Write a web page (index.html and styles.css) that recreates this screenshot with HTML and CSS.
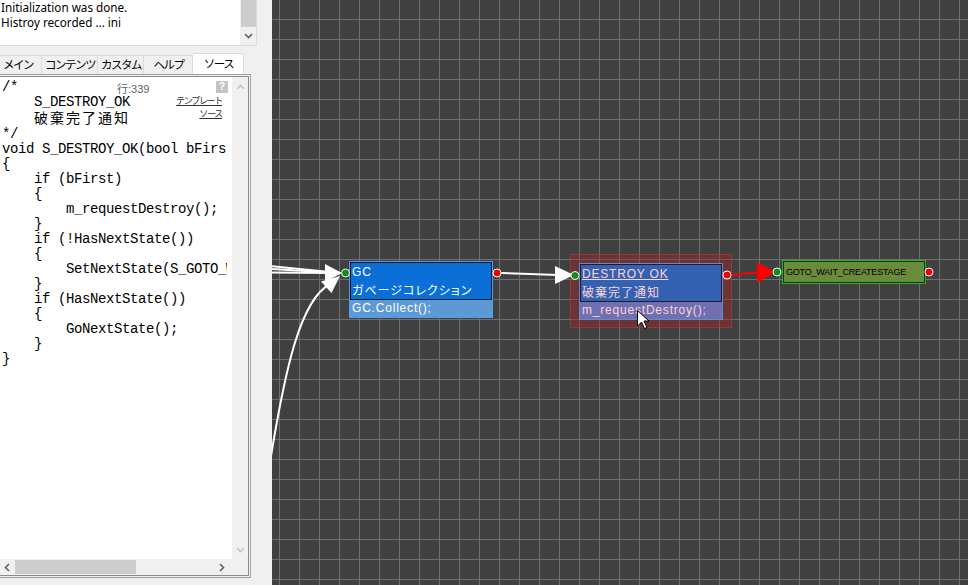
FILE: index.html
```html
<!DOCTYPE html>
<html lang="ja">
<head>
<meta charset="utf-8">
<title>State Editor</title>
<link rel="stylesheet" href="styles.css">
</head>
<body>
<div class="app">
  <aside class="side">
    <div class="log">
      <div class="log-text">
        <div>Initialization was done.</div>
        <div>Histroy recorded ... ini</div>
      </div>
      <div class="log-scroll">
        <div class="log-thumb"></div>
        <svg class="chev" width="9" height="6" viewBox="0 0 9 6"><polyline points="1,1 4.5,4.5 8,1" fill="none" stroke="#606060" stroke-width="1.6"/></svg>
      </div>
    </div>

    <div class="tabs">
      <div class="tab t1">メイン</div>
      <div class="tab t2">コンテンツ</div>
      <div class="tab t3">カスタム</div>
      <div class="tab t4">ヘルプ</div>
      <div class="tab sel">ソース</div>
    </div>

    <div class="codepanel">
      <div class="editor">
        <div class="textarea">
<pre class="code">/*
    S_DESTROY_OK
    <span class="jp">破棄完了通知</span>
*/
void S_DESTROY_OK(bool bFirst)
{
    if (bFirst)
    {
        m_requestDestroy();
    }
    if (!HasNextState())
    {
        SetNextState(S_GOTO_WAIT_CREATESTAGE);
    }
    if (HasNextState())
    {
        GoNextState();
    }
}</pre>
          <div class="lineno">行:339</div>
          <div class="help">?</div>
          <div class="links"><span class="link">テンプレート</span><span class="link">ソース</span></div>
        </div>
        <div class="vscroll">
          <svg width="9" height="6" viewBox="0 0 9 6"><polyline points="1,5 4.5,1.5 8,5" fill="none" stroke="#c4c4c4" stroke-width="1.6"/></svg>
          <svg width="9" height="6" viewBox="0 0 9 6"><polyline points="1,1 4.5,4.5 8,1" fill="none" stroke="#c4c4c4" stroke-width="1.6"/></svg>
        </div>
        <div class="hscroll">
          <div class="harrow"><svg width="6" height="9" viewBox="0 0 6 9"><polyline points="5,1 1.5,4.5 5,8" fill="none" stroke="#606060" stroke-width="1.6"/></svg></div>
          <div class="hthumb"></div>
          <div class="harrow right"><svg width="6" height="9" viewBox="0 0 6 9"><polyline points="1,1 4.5,4.5 1,8" fill="none" stroke="#606060" stroke-width="1.6"/></svg></div>
        </div>
        <div class="corner"></div>
      </div>
    </div>
  </aside>

  <main class="canvas">
    <div class="sel-hl"></div>

    <div class="node gc">
      <div class="hdr">
        <div class="title">GC</div>
        <div class="sub jp">ガベージコレクション</div>
      </div>
      <div class="row">GC.Collect();</div>
    </div>

    <div class="node destroy">
      <div class="hdr">
        <div class="title"><u>DESTROY OK</u></div>
        <div class="sub jp">破棄完了通知</div>
      </div>
      <div class="row">m_requestDestroy();</div>
    </div>

    <div class="goto">
      <div class="goto-in">GOTO_WAIT_CREATESTAGE</div>
    </div>

    <svg class="wires" width="696" height="585" viewBox="0 0 696 585">
      <g stroke="#ffffff" stroke-width="2" fill="none">
        <line x1="-2" y1="266" x2="58" y2="272"/>
        <line x1="-2" y1="269" x2="58" y2="272.5"/>
        <line x1="-2" y1="272.5" x2="58" y2="273"/>
        <path d="M -2 462 C 13 370, 28 300, 58 284"/>
        <line x1="229" y1="273" x2="286" y2="275"/>
      </g>
      <g fill="#ffffff">
        <polygon points="53,264 70,273 53,282"/>
        <polygon points="68,276 59.5,293 49,281.5"/>
        <polygon points="283,266 302,275 283,284"/>
      </g>
      <line x1="459" y1="275" x2="488" y2="272" stroke="#ff0000" stroke-width="2"/>
      <polygon points="485,262 503,272 485,283" fill="#ff0000"/>

      <g stroke="#e8ffe8" stroke-width="1">
        <circle cx="73.5" cy="273" r="4" fill="#168a16"/>
        <circle cx="303" cy="275.5" r="4" fill="#168a16"/>
        <circle cx="505" cy="272" r="4" fill="#168a16"/>
      </g>
      <g stroke="#ffffff" stroke-width="1">
        <circle cx="225" cy="273" r="4" fill="#ee0000"/>
        <circle cx="455" cy="275" r="4" fill="#ee0000"/>
        <circle cx="657" cy="272" r="4" fill="#ee0000"/>
      </g>

      <path d="M365.5 310.5 L365.5 326 L369.5 322 L372.5 328.5 L375 327.5 L372 321 L377 321 Z" fill="#ffffff" stroke="#000000" stroke-width="1"/>
    </svg>
  </main>
</div>
</body>
</html>
```

FILE: styles.css
```css
* { box-sizing: border-box; }

html, body {
  margin: 0;
  padding: 0;
}

body {
  width: 968px;
  height: 585px;
  overflow: hidden;
  background: #f0f0f0;
  font-family: "Noto Sans", "Noto Sans CJK JP", sans-serif;
}

.app {
  display: flex;
  width: 968px;
  height: 585px;
}

/* ---------- left side panel ---------- */
.side {
  width: 272px;
  flex: none;
  background: #f0f0f0;
  display: flex;
  flex-direction: column;
  overflow: hidden;
}

.log {
  display: flex;
  width: 257px;
  height: 46px;
  background: #ffffff;
  border-right: 1px solid #dadada;
  border-bottom: 1px solid #dadada;
}

.log-text {
  flex: 1;
  padding-left: 1px;
  font-size: 11.7px;
  line-height: 15px;
  color: #000;
  white-space: nowrap;
  overflow: hidden;
}

.log-scroll {
  width: 16px;
  background: #f0f0f0;
  display: flex;
  flex-direction: column;
  align-items: center;
}

.log-thumb {
  width: 15px;
  height: 27px;
  background: #cdcdcd;
}

.log-scroll .chev { margin-top: 6px; }

/* tabs */
.tabs {
  display: flex;
  align-items: flex-end;
  height: 21px;
  margin-top: 7px;
  font-family: "Noto Sans CJK JP", sans-serif;
  font-size: 11.5px;
  letter-spacing: -1.5px;
  color: #000;
}

.tab {
  height: 19px;
  border-top: 1px solid #dadada;
  border-right: 1px solid #dadada;
  text-align: center;
  line-height: 17px;
  white-space: nowrap;
  padding-left: 1px;
}

.t1 { width: 48px; margin-left: -6px; }
.t2 { width: 56px; }
.t3 { width: 46px; }
.t4 { width: 49px; }

.tab.sel {
  width: 51px;
  height: 21px;
  line-height: 19px;
  background: #ffffff;
}

/* code panel */
.codepanel {
  width: 255px;
  height: 504px;
  margin-left: -4px;
  border: 1px solid #a0a0a0;
  padding: 1px;
  background: #f0f0f0;
}

.editor {
  height: 100%;
  border: 1px solid #8a8a8a;
  display: grid;
  grid-template-columns: 233px 16px;
  grid-template-rows: 482px 16px;
  background: #ffffff;
}

.textarea {
  position: relative;
  background: #ffffff;
  overflow: hidden;
}

.code {
  margin: 0;
  padding: 3px 0 0 3px;
  width: 228px;
  overflow: hidden;
  font-family: "Liberation Mono", "Noto Sans CJK JP", monospace;
  font-size: 14px;
  letter-spacing: -0.4px;
  line-height: 15px;
  color: #000;
  white-space: pre;
}

.code .jp {
  font-family: "Noto Sans CJK JP", sans-serif;
  font-size: 14px;
  line-height: 15px;
  letter-spacing: 2px;
}

.lineno {
  position: absolute;
  left: 118px;
  top: 6px;
  font-family: "Liberation Sans", "Noto Sans CJK JP", sans-serif;
  font-size: 11px;
  line-height: 12px;
  color: #5a6470;
}

.help {
  position: absolute;
  left: 217px;
  top: 4px;
  width: 12px;
  height: 12px;
  background: #c4c4c4;
  color: #ffffff;
  font-family: "Liberation Sans", sans-serif;
  font-weight: bold;
  font-size: 10px;
  line-height: 12px;
  text-align: center;
}

.links {
  position: absolute;
  right: 10px;
  top: 17px;
  display: flex;
  flex-direction: column;
  align-items: flex-end;
  font-family: "Noto Sans CJK JP", sans-serif;
  font-size: 9px;
  letter-spacing: -1.3px;
  line-height: 13px;
}

.link {
  color: #303030;
  text-decoration: underline;
}

.vscroll {
  background: #f0f0f0;
  display: flex;
  flex-direction: column;
  justify-content: space-between;
  align-items: center;
  padding: 7px 0 6px;
}

.hscroll {
  background: #f0f0f0;
  display: flex;
  align-items: center;
  padding-right: 2px;
}

.harrow {
  width: 16px;
  height: 16px;
  display: flex;
  align-items: center;
  justify-content: center;
}

.harrow.right { margin-left: auto; }

.hthumb {
  width: 121px;
  height: 14px;
  background: #cdcdcd;
}

.corner { background: #f0f0f0; }

/* ---------- canvas ---------- */
.canvas {
  position: relative;
  flex: 1;
  height: 585px;
  overflow: hidden;
  background-color: #404040;
  background-image:
    linear-gradient(to right, #6e6e6e 1px, transparent 1px),
    linear-gradient(to bottom, #6e6e6e 1px, transparent 1px);
  background-size: 20px 20px;
  background-position: 7px 19px;
}

.wires {
  position: absolute;
  left: 0;
  top: 0;
  pointer-events: none;
}

.sel-hl {
  position: absolute;
  left: 298px;
  top: 254px;
  width: 162px;
  height: 74px;
  background: rgba(165, 35, 35, 0.42);
  border: 1px solid rgba(190, 60, 60, 0.5);
}

.node {
  position: absolute;
  width: 144px;
  font-family: "Liberation Sans", "Noto Sans CJK JP", sans-serif;
  font-size: 12px;
  letter-spacing: 0.8px;
  white-space: nowrap;
  border: 1px solid #4aa0ee;
}

.node .hdr {
  height: 38px;
  border: 1px solid #0d1424;
  padding: 0 0 0 1px;
}

.node .title { line-height: 18px; height: 18px; }
.node .sub { line-height: 17px; height: 17px; }

.node .jp {
  font-family: "Noto Sans CJK JP", sans-serif;
  font-feature-settings: "palt";
  letter-spacing: 1px;
}

.node .row {
  height: 17px;
  line-height: 17px;
  padding-left: 2px;
}

.gc {
  left: 77px;
  top: 261px;
  color: #ffffff;
  background: #5c9dd9;
}

.gc .hdr { background: #0a70d8; }
.gc .row { background: #5c9ad6; }

.destroy {
  left: 307px;
  top: 263px;
  color: #ffd2d6;
  border-color: #6688cc;
  background: #6e70b4;
}

.destroy .hdr {
  background: #3462b3;
  border-color: #2a1628;
}

.destroy .row { background: #6f6fb2; }

.destroy u { text-decoration-thickness: 1px; text-underline-offset: 1px; }

.goto {
  position: absolute;
  left: 510px;
  top: 260px;
  width: 144px;
  height: 24px;
  border: 1px solid #26b026;
}

.goto-in {
  height: 22px;
  border: 1px solid #103a10;
  background: #6b8a3b;
  padding-left: 2px;
  font-family: "Liberation Sans", sans-serif;
  font-size: 9px;
  letter-spacing: -0.2px;
  line-height: 20px;
  color: #000;
  white-space: nowrap;
}
```
